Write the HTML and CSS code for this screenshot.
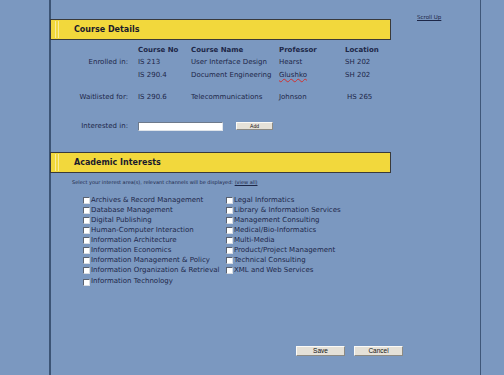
FILE: index.html
```html
<!DOCTYPE html>
<html lang="en">
    <head>
        <meta charset="UTF-8">
        <meta name="viewport" content="width=device-width, initial-scale=1.0">
        <title>My Courses</title>
        <link rel="stylesheet" href="styles.css">
    </head>
    <body>
        <div class="page">
            <div class="top">
                <div class="section">
                    <div class="bar"><span class="grip"></span><h2>Course Details</h2></div>
                    <div class="courses">
                        <span></span>
                        <span class="head">Course No</span>
                        <span class="head">Course Name</span>
                        <span class="head">Professor</span>
                        <span class="head">Location</span>

                        <span class="label">Enrolled in:</span>
                        <span>IS 213</span>
                        <span>User Interface Design</span>
                        <span>Hearst</span>
                        <span>SH 202</span>

                        <span></span>
                        <span>IS 290.4</span>
                        <span>Document Engineering</span>
                        <span class="misspelled">Glushko</span>
                        <span>SH 202</span>

                        <span class="label">Waitlisted for:</span>
                        <span>IS 290.6</span>
                        <span>Telecommunications</span>
                        <span>Johnson</span>
                        <span class="shift">HS 265</span>
                    </div>
                    <div class="interested">
                        <span class="label">Interested in:</span>
                        <input type="text" class="field">
                        <button class="btn add">Add</button>
                    </div>
                </div>
                <a href="#" class="scroll">Scroll Up</a>
            </div>

            <div class="section">
                <div class="bar"><span class="grip"></span><h2>Academic Interests</h2></div>
                <p class="hint">Select your interest area(s), relevant channels will be displayed: <a href="#">(view all)</a></p>
                <div class="interests">
                    <label><input type="checkbox">Archives &amp; Record Management</label>
                    <label><input type="checkbox">Database Management</label>
                    <label><input type="checkbox">Digital Publishing</label>
                    <label><input type="checkbox">Human-Computer Interaction</label>
                    <label><input type="checkbox">Information Architecture</label>
                    <label><input type="checkbox">Information Economics</label>
                    <label><input type="checkbox"> Information Management &amp; Policy</label>
                    <label><input type="checkbox">Information Organization &amp; Retrieval</label>
                    <label class="last"><input type="checkbox">Information Technology</label>
                    <label><input type="checkbox">Legal Informatics</label>
                    <label><input type="checkbox">Library &amp; Information Services</label>
                    <label><input type="checkbox">Management Consulting</label>
                    <label><input type="checkbox">Medical/Bio-Informatics</label>
                    <label><input type="checkbox">Multi-Media</label>
                    <label><input type="checkbox">Product/Project Management</label>
                    <label><input type="checkbox">Technical Consulting</label>
                    <label><input type="checkbox">XML and Web Services</label>
                </div>
            </div>

            <div class="actions">
                <button class="btn">Save</button>
                <button class="btn">Cancel</button>
            </div>
        </div>
    </body>
</html>
```

FILE: styles.css
```css
body {
    margin: 0;
    height: 375px;
    overflow: hidden;
    background: #7b98c0;
    font-family: "DejaVu Sans", Verdana, sans-serif;
    color: #1d2748;
}

.page {
    margin-left: 49px;
    width: 432px;
    height: 375px;
    box-sizing: border-box;
    border-left: 2px solid #3c5475;
    border-right: 1px solid #3f5779;
    padding-top: 14px;
}

.top {
    display: flex;
    align-items: flex-start;
    margin-bottom: 20px;
}

.section {
    width: 341px;
    margin-left: -1px;
}

.scroll {
    margin-left: 26px;
    font-size: 5.5px;
    line-height: 7px;
    color: #1d2748;
}

.bar {
    display: flex;
    align-items: center;
    height: 21px;
    box-sizing: border-box;
    margin-top: 5px;
    background: #f2d83c;
    border: 1px solid #3a3a3a;
    padding-left: 4px;
}

.grip {
    width: 2px;
    height: 17px;
    border-left: 1px solid #f9eb9a;
    border-right: 1px solid #f9eb9a;
    margin-right: 15px;
}

.bar h2 {
    margin: 0;
    font-size: 8px;
    font-weight: bold;
    color: #1a1a2c;
}

.courses {
    display: grid;
    grid-template-columns: 88px 53px 88px 66px auto;
    grid-template-rows: 12px 12px 13px 22px;
    align-items: end;
    margin-top: 4px;
    font-size: 7px;
    line-height: 12px;
    white-space: nowrap;
}

.head {
    font-weight: bold;
}

.label {
    text-align: right;
    padding-right: 10px;
}

.misspelled {
    text-decoration: underline wavy #d03030;
    text-decoration-thickness: 1px;
}

.shift {
    padding-left: 2px;
}

.interested {
    display: flex;
    align-items: center;
    height: 12px;
    margin-top: 17px;
    font-size: 7px;
}

.interested .label {
    width: 88px;
    box-sizing: border-box;
}

.field {
    width: 85px;
    height: 9px;
    box-sizing: border-box;
    padding: 0;
    margin: 0;
    background: #fff;
    border: 1px solid;
    border-color: #6d7a8c #dfe4ea #dfe4ea #6d7a8c;
}

.btn {
    height: 10px;
    width: 49px;
    padding: 0;
    margin: 0;
    font-family: "Liberation Sans", Arial, sans-serif;
    font-size: 6.5px;
    line-height: 8px;
    color: #111;
    background: #e5e1d8;
    border: 1px solid;
    border-color: #fbfaf6 #8c8a84 #8c8a84 #fbfaf6;
}

.btn.add {
    width: 37px;
    height: 8px;
    margin-left: 13px;
    font-size: 5px;
    line-height: 6px;
}

.hint {
    margin: 5px 0 0;
    padding-left: 22px;
    font-size: 5px;
    line-height: 8px;
    white-space: nowrap;
}

.hint a {
    color: #1d2748;
}

.interests {
    display: grid;
    grid-template-columns: 143px auto;
    grid-template-rows: repeat(8, 10px) 11px;
    grid-auto-flow: column;
    margin-top: 9px;
    padding-left: 33px;
    font-size: 7px;
    line-height: 10px;
    white-space: nowrap;
}

.interests label {
    display: flex;
    align-items: center;
}

.interests .last {
    align-items: flex-end;
}

.interests input {
    appearance: none;
    width: 7px;
    height: 7px;
    margin: 0 1px 0 0;
    box-sizing: border-box;
    background: #fff;
    border: 1px solid;
    border-color: #5a6270 #d8dde4 #d8dde4 #5a6270;
}

.actions {
    display: flex;
    gap: 9px;
    margin-top: 60px;
    padding-left: 245px;
}
```
